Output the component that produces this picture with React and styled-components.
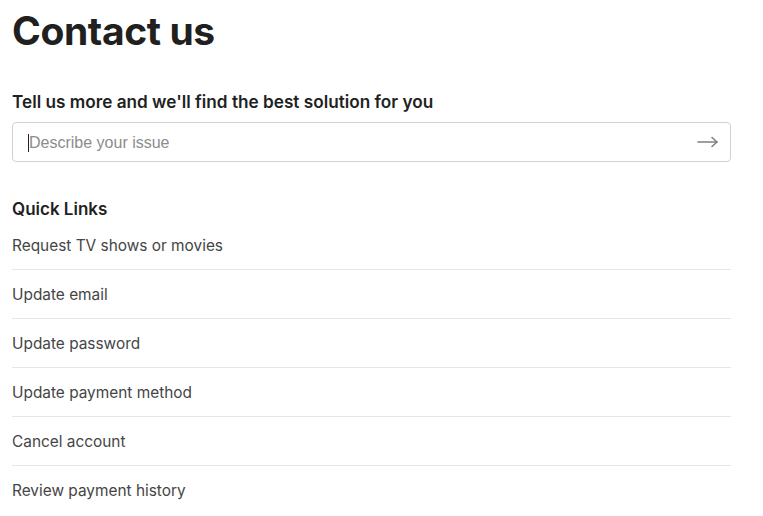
import React from "react";
import styled, { createGlobalStyle } from "styled-components";

const Global = createGlobalStyle`
  html, body { margin: 0; padding: 0; background: #fff; }
  body { font-family: Inter, "Noto Sans", sans-serif; color: #221f1f; }
`;

const Page = styled.main`
  width: 719px;
  padding: 7px 12px 0;
`;

const Title = styled.h1`
  margin: 0;
  font-size: 39px;
  line-height: 48px;
  font-weight: 700;
  letter-spacing: -0.4px;
  color: #221f1f;
`;

const Subtitle = styled.h2`
  margin: 35px 0 8px;
  font-size: 17.2px;
  line-height: 24px;
  font-weight: 600;
  color: #221f1f;
`;

const SearchBox = styled.form`
  display: flex;
  align-items: center;
  height: 40px;
  box-sizing: border-box;
  border: 1px solid #d2d2d2;
  border-radius: 4px;
  padding: 2px 11px 0 15px;
`;

const SearchInput = styled.input`
  flex: 1;
  border: none;
  outline: none;
  font-family: "Liberation Sans", Arial, sans-serif;
  font-size: 16px;
  color: #333;
  padding: 0;
  background: transparent;
  caret-color: #000;
  &::placeholder { color: #8c8c8c; }
`;

const Caret = styled.span`
  width: 1px;
  height: 18px;
  background: #222;
`;

const ArrowButton = styled.button`
  border: none;
  background: none;
  padding: 0;
  margin-top: -2px;
  display: flex;
  align-items: center;
  color: #808080;
  cursor: pointer;
`;

const SectionTitle = styled.h3`
  margin: 35px 0 0;
  font-size: 17px;
  line-height: 24px;
  font-weight: 600;
  color: #221f1f;
`;

const LinkList = styled.ul`
  list-style: none;
  margin: 0;
  padding: 0;
`;

const LinkItem = styled.li`
  height: 49px;
  box-sizing: border-box;
  display: flex;
  align-items: center;
  border-bottom: ${(p) => (p.$last ? "none" : "1px solid #e6e6e6")};
  font-size: 15.4px;
  color: #454545;
  & a { color: inherit; text-decoration: none; }
`;

const links = [
  "Request TV shows or movies",
  "Update email",
  "Update password",
  "Update payment method",
  "Cancel account",
  "Review payment history",
];

export default function App() {
  return (
    <>
      <Global />
      <Page>
        <Title>Contact us</Title>
        <Subtitle>Tell us more and we'll find the best solution for you</Subtitle>
        <SearchBox onSubmit={(e) => e.preventDefault()}>
          <Caret />
          <SearchInput placeholder="Describe your issue" />
          <ArrowButton type="submit" aria-label="Submit">
            <svg width="22" height="12" viewBox="0 0 22 12" fill="none" stroke="currentColor" strokeWidth="1.6" strokeLinecap="round" strokeLinejoin="round">
              <path d="M1 6h19" />
              <path d="M15 1.5l5 4.5-5 4.5" />
            </svg>
          </ArrowButton>
        </SearchBox>
        <SectionTitle>Quick Links</SectionTitle>
        <LinkList>
          {links.map((l, i) => (
            <LinkItem key={l} $last={i === links.length - 1}>
              <a href="#">{l}</a>
            </LinkItem>
          ))}
        </LinkList>
      </Page>
    </>
  );
}
